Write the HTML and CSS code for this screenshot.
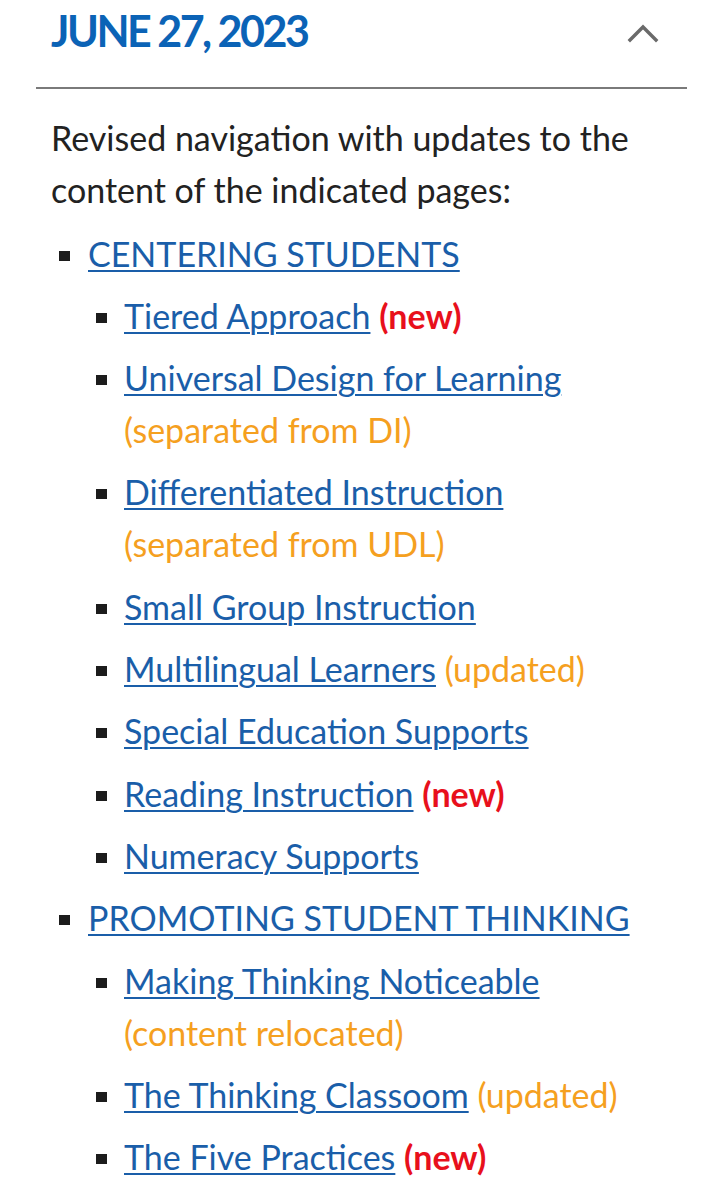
FILE: index.html
```html
<!DOCTYPE html>
<html lang="en">
<head>
<meta charset="utf-8">
<title>Changelog</title>
<link rel="stylesheet" href="styles.css">
</head>
<body>
<section class="entry">
  <header class="entry-head">
    <h2 class="entry-date">JUNE 27, 2023</h2>
    <svg class="chevron" width="32" height="20" viewBox="0 0 32 20" aria-hidden="true">
      <polyline points="3,16 16,3 29,16" fill="none" stroke="#6a6a6a" stroke-width="3.4" stroke-linecap="square"/>
    </svg>
  </header>
  <div class="entry-body">
    <p class="intro">Revised navigation with updates to the content of the indicated pages:</p>
    <ul class="nav-list">
      <li class="top">
        <div class="item"><a href="#">CENTERING STUDENTS</a></div>
        <ul class="sub-list">
          <li><div class="item"><a href="#">Tiered Approach</a> <span class="tag-new">(new)</span></div></li>
          <li><div class="item"><a href="#">Universal Design for Learning</a> <span class="tag-note">(separated from DI)</span></div></li>
          <li><div class="item"><a href="#">Differentiated Instruction</a> <span class="tag-note">(separated from UDL)</span></div></li>
          <li><div class="item"><a href="#">Small Group Instruction</a></div></li>
          <li><div class="item"><a href="#">Multilingual Learners</a> <span class="tag-note">(updated)</span></div></li>
          <li><div class="item"><a href="#">Special Education Supports</a></div></li>
          <li><div class="item"><a href="#">Reading Instruction</a> <span class="tag-new">(new)</span></div></li>
          <li><div class="item"><a href="#">Numeracy Supports</a></div></li>
        </ul>
      </li>
      <li class="top">
        <div class="item"><a href="#">PROMOTING STUDENT THINKING</a></div>
        <ul class="sub-list">
          <li><div class="item"><a href="#">Making Thinking Noticeable</a> <span class="tag-note">(content relocated)</span></div></li>
          <li><div class="item"><a href="#">The Thinking Classoom</a> <span class="tag-note">(updated)</span></div></li>
          <li><div class="item"><a href="#">The Five Practices</a> <span class="tag-new">(new)</span></div></li>
        </ul>
      </li>
    </ul>
  </div>
</section>
</body>
</html>
```

FILE: styles.css
```css
html, body {
  margin: 0;
  padding: 0;
  background: #ffffff;
}

body {
  font-family: Lato, "Noto Sans", sans-serif;
  color: #222222;
}

.entry {
  margin: 0 35px 0 36px;
}

.entry-head {
  display: flex;
  justify-content: space-between;
  align-items: flex-start;
  padding: 5px 28px 30px 15px;
  border-bottom: 2px solid #7a7a7a;
}

.entry-date {
  margin: 0;
  font-size: 43px;
  line-height: 1.2;
  font-weight: 700;
  letter-spacing: -2.5px;
  color: #0b63b6;
}

.chevron {
  display: block;
  margin-top: 19px;
}

.entry-body {
  padding: 0 0 0 15px;
}

.intro {
  margin: 23px 0 0 0;
  font-size: 34px;
  line-height: 52px;
}

.nav-list,
.sub-list {
  list-style: none;
  margin: 0;
  padding: 0;
}

.nav-list {
  margin-top: 12px;
  padding-left: 8px;
}

.sub-list {
  padding-left: 8px;
}

.nav-list li {
  display: grid;
  grid-template-columns: 11px 1fr;
  column-gap: 17px;
  margin-top: 10.3px;
  font-size: 34px;
  line-height: 52px;
}

.nav-list > li:first-child {
  margin-top: 0;
}

.nav-list > li {
  column-gap: 18px;
}

.nav-list li::before {
  content: "";
  grid-column: 1;
  grid-row: 1;
  width: 11px;
  height: 10px;
  margin-top: 23px;
  background: #1c1c1c;
}

.nav-list li > .item {
  grid-column: 2;
  grid-row: 1;
}

.nav-list li > .sub-list {
  grid-column: 2;
  grid-row: 2;
}

.item a {
  color: #1a5ea9;
  text-decoration: underline;
  text-decoration-thickness: 2px;
  text-underline-offset: 3px;
}

.tag-new,
.tag-note {
  white-space: nowrap;
}

.tag-new {
  color: #e8101c;
  font-weight: 700;
}

.tag-note {
  color: #f5a01f;
}
```
